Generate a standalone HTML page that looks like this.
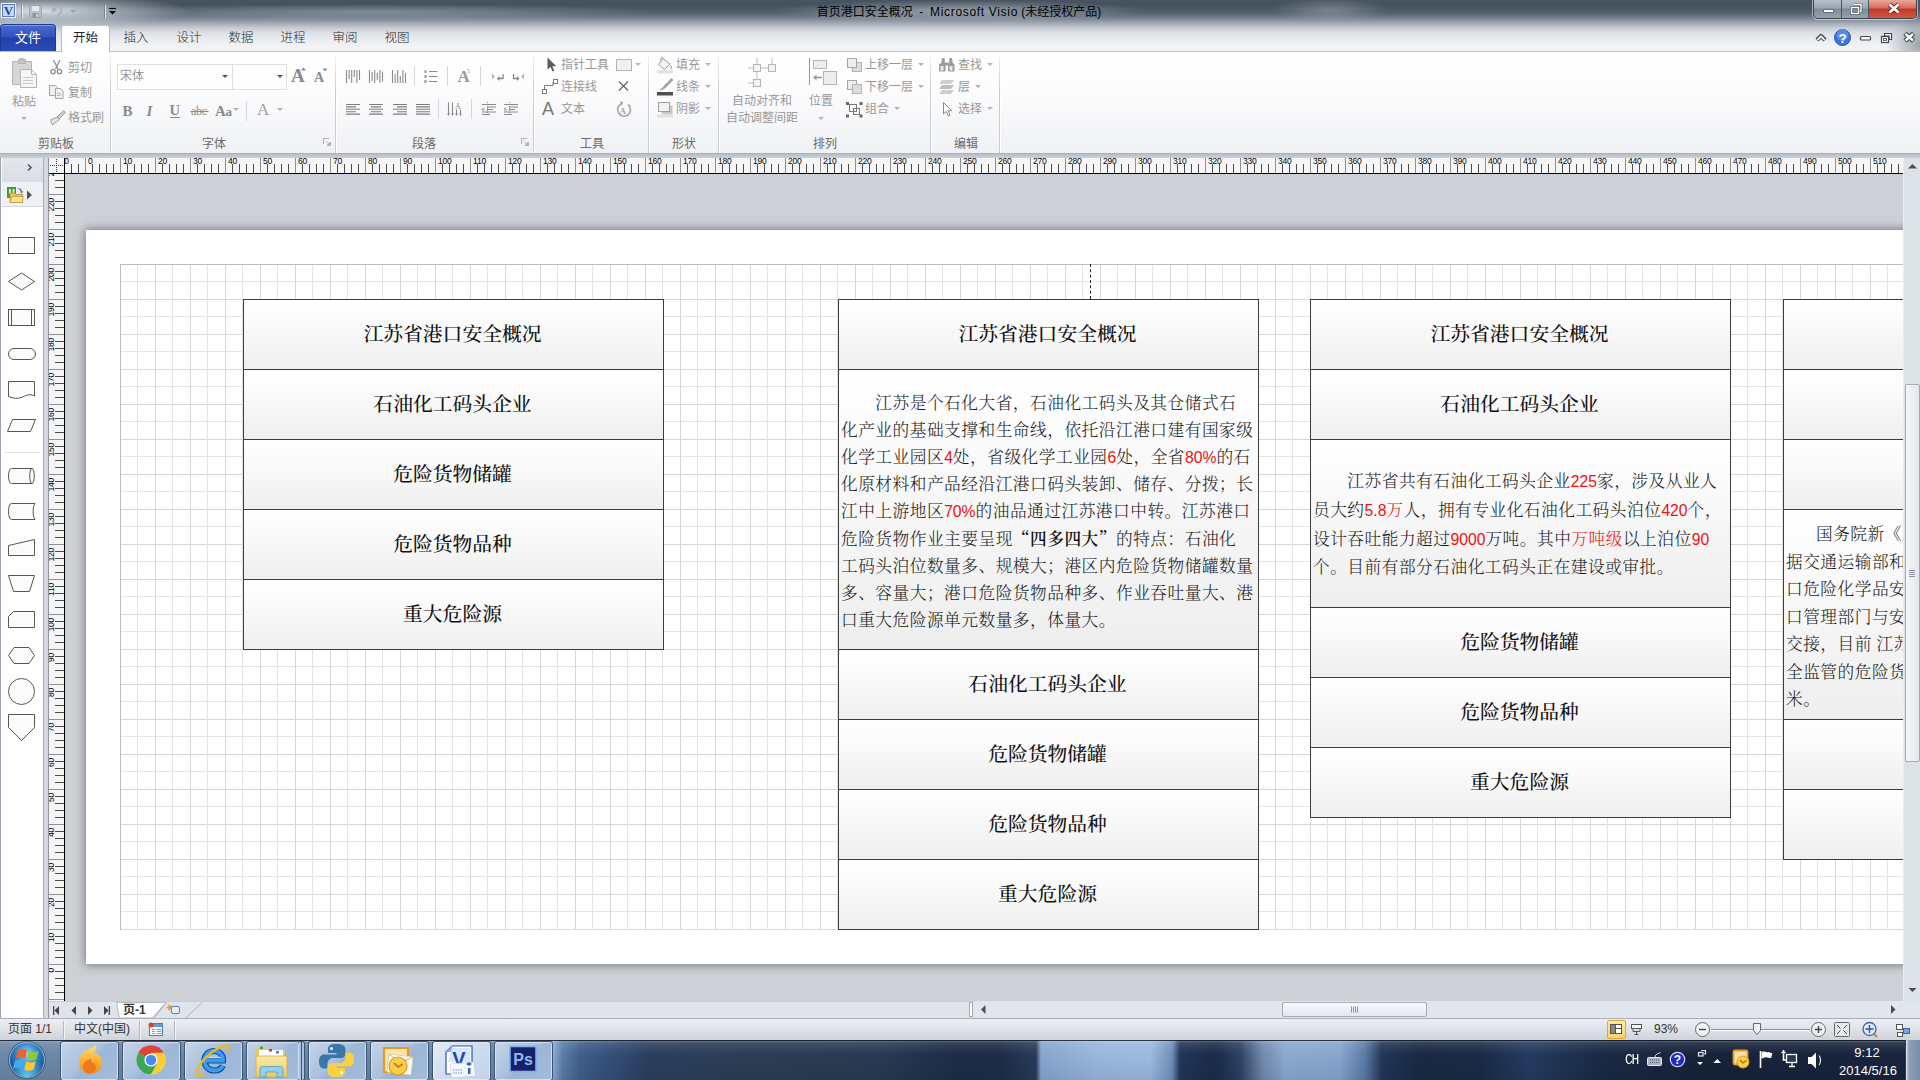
<!DOCTYPE html>
<html lang="zh-CN">
<head>
<meta charset="utf-8">
<title>首页港口安全概况 - Microsoft Visio</title>
<style>
*{box-sizing:border-box;margin:0;padding:0}
html,body{width:1920px;height:1080px;overflow:hidden;background:#dfe3e8}
body{position:relative;font-family:"Liberation Sans","Noto Sans CJK SC",sans-serif;font-size:12px;color:#000}
.abs{position:absolute}
/* ---------- title bar ---------- */
#titlebar{position:absolute;left:0;top:0;width:1920px;height:52px;
 background:
  radial-gradient(ellipse 150px 17px at 40px 11px,rgba(226,232,238,.95),rgba(226,232,238,0) 100%),
  radial-gradient(ellipse 40px 30px at 1925px 45px,rgba(70,82,95,.55),rgba(70,82,95,0) 100%),
  radial-gradient(ellipse 60px 12px at 1330px 10px,rgba(200,208,216,.35),rgba(200,208,216,0) 100%),
  radial-gradient(ellipse 300px 8px at 370px 12px,rgba(165,180,196,.55),rgba(165,180,196,0) 100%),
  radial-gradient(ellipse 190px 11px at 960px 11px,rgba(205,211,219,.6),rgba(205,211,219,0) 100%),
  linear-gradient(to bottom,#48545f 0px,#44515e 5px,#4f5c69 12px,#66727e 16px,#87919c 20px,#a8b0b9 24px,#c6cbd2 28px,#dadee3 32px,#e8eaee 38px,#f0f2f4 46px,#f4f5f7 52px);}
#title{position:absolute;left:759px;top:4px;width:400px;text-align:center;font-size:12px;line-height:17px;color:#000;white-space:nowrap}
/* ---------- canvas ---------- */
#canvas{position:absolute;left:65px;top:174px;width:1838px;height:827px;background:#cdd0d5;overflow:hidden}
#page{position:absolute;left:21px;top:56px;width:1900px;height:734px;background:#fff;box-shadow:0 0 9px 1px rgba(60,66,76,.6)}
#grid{position:absolute;left:34px;top:34px;width:1870px;height:666px;border-left:1px solid #bdbdbd;border-top:1px solid #bdbdbd;
 background-image:
  linear-gradient(to right,#d6d6d6 1px,transparent 1px),
  linear-gradient(to right,#e4e4e4 1px,transparent 1px),
  linear-gradient(to bottom,#d6d6d6 1px,transparent 1px),
  linear-gradient(to bottom,#e4e4e4 1px,transparent 1px);
 background-size:35px 100%,35px 100%,100% 35px,100% 35px;
 background-position:-1px 0,16px 0,0 -1px,0 16px;
 background-repeat:repeat}
.box{position:absolute;border:1px solid #3c3c3c;border-bottom:none;font-family:"Liberation Serif","Noto Serif CJK SC",serif}
.cell{padding-right:2px;border-bottom:1px solid #3c3c3c;background:linear-gradient(to bottom,#ffffff 0%,#fafafa 35%,#efefef 100%);height:70px;text-align:center;font-size:19.8px;font-weight:500;line-height:69px;white-space:nowrap;overflow:hidden;color:#111}
.para{border-bottom:1px solid #3c3c3c;background:linear-gradient(to bottom,#ffffff 0%,#f9f9f9 35%,#eeeeee 100%);font-size:16.7px;font-weight:300;line-height:27px;color:#1a1a1a;white-space:nowrap;overflow:hidden;letter-spacing:.5px}
.para b{font-weight:600;color:#111}
.r{color:#f01010;font-family:"Liberation Sans",sans-serif;font-size:15.7px;letter-spacing:0}
.q{font-family:"Noto Serif CJK SC",serif}
.rc{color:#f01010}
/* ---------- generic ---------- */
.t{position:absolute;white-space:nowrap;line-height:14px;font-size:12px}
.g{color:#8c8c8c}
svg{position:absolute;overflow:visible}
/* ---------- rulers ---------- */
#rgap{position:absolute;left:0;top:153px;width:1920px;height:5px;background:linear-gradient(to bottom,#9fa5af 0,#b9bec6 1px,#cbcfd6 5px)}
#hruler{position:absolute;left:65px;top:158px;width:1838px;height:16px;border-bottom:1px solid #000;overflow:hidden;
 background:
  repeating-linear-gradient(to right,#8f8f8f 0,#8f8f8f 1px,transparent 1px,transparent 35px) 20px 0/100% 100% no-repeat,
  repeating-linear-gradient(to right,#4a4a4a 0,#4a4a4a 1px,transparent 1px,transparent 7px) 6px 6px/100% 100% no-repeat,
  #f5f5f5}
#vruler{position:absolute;left:49px;top:174px;width:16px;height:827px;border-right:1px solid #000;overflow:hidden;
 background:
  repeating-linear-gradient(to bottom,#8f8f8f 0,#8f8f8f 1px,transparent 1px,transparent 35px) 0 20px/100% 100% no-repeat,
  repeating-linear-gradient(to bottom,#4a4a4a 0,#4a4a4a 1px,transparent 1px,transparent 7px) 6px 6px/100% 100% no-repeat,
  #f5f5f5}
#rcorner{position:absolute;left:49px;top:158px;width:16px;height:16px;background:#f5f5f5;border-right:1px solid #000;border-bottom:1px solid #000}
.hl{position:absolute;top:-1px;font-size:8.5px;line-height:9px;color:#000;font-family:"Liberation Sans",sans-serif;letter-spacing:-.2px}
.vl{position:absolute;left:-2px;margin-top:2px;font-size:8.5px;line-height:9px;color:#000;font-family:"Liberation Sans",sans-serif;letter-spacing:-.2px;transform-origin:0 0;transform:rotate(-90deg) translateX(-100%);white-space:nowrap}
#rleft{position:absolute;left:44px;top:158px;width:5px;height:860px;background:linear-gradient(to right,#d6dae0 0,#d6dae0 4px,#8e95a1 4px)}

/* ---------- shapes panel ---------- */
#shapes{position:absolute;left:0;top:158px;width:44px;height:860px;background:#fff;border-left:1px solid #9aa1ad;border-right:1px solid #a9afb9}
#shapes .h1{position:absolute;left:1px;top:0;width:41px;height:24px;background:linear-gradient(#e4e7ec,#d9dde4)}
#shapes .h2{position:absolute;left:1px;top:24px;width:41px;height:25px;background:#eef0f4;border-bottom:1px solid #d3d7de}
#shapes svg{left:-1px;top:0}

/* ---------- tabs / ribbon ---------- */
#filetab{position:absolute;left:0;top:24px;width:56px;height:27px;border-radius:4px 4px 0 0;border:1px solid #1c3a96;border-bottom:none;
 background:linear-gradient(to bottom,#4668cf 0,#3355c0 45%,#2440a8 50%,#2a4bb6 100%);box-shadow:inset 0 1px 0 rgba(255,255,255,.35);color:#fff;text-align:center;font-size:13px;line-height:25px}
#hometab{position:absolute;left:61px;top:25px;width:49px;height:28px;border:1px solid #b9bec7;border-bottom:none;border-radius:3px 3px 0 0;background:#fff;text-align:center;font-size:12.5px;line-height:24px;color:#222;z-index:3}
.tab{position:absolute;top:26px;width:40px;text-align:center;font-size:12.5px;line-height:24px;color:#2a2a2a;font-weight:300}
#ribbon{position:absolute;left:0;top:51px;width:1920px;height:102px;border-top:1px solid #b9bec7;background:linear-gradient(to bottom,#ffffff 0,#fcfcfd 40%,#eff1f4 100%);z-index:2}
.gs{position:absolute;top:3px;width:2px;height:98px;background:linear-gradient(to right,#c9cdd4 0,#c9cdd4 1px,#fff 1px);-webkit-mask-image:linear-gradient(to bottom,rgba(0,0,0,.2) 0,#000 35%);mask-image:linear-gradient(to bottom,rgba(0,0,0,.2) 0,#000 35%)}
.gl{position:absolute;top:84px;margin-top:2px;font-size:12px;line-height:14px;color:#6a6a6a;white-space:nowrap}
.rt{position:absolute;margin-top:1px;font-size:12px;line-height:14px;color:#989898;white-space:nowrap}
.is{position:absolute;width:1px;height:20px;background:#d4d8de}
.dd{position:absolute;width:0;height:0;border-left:3px solid transparent;border-right:3px solid transparent;border-top:3px solid #b4b4b4}
.combo{position:absolute;height:26px;border:1px solid #dde1e7;background:#fdfdfd}

/* ---------- bottom: page tabs, scrollbars, status ---------- */
#vscroll{position:absolute;left:1903px;top:158px;width:17px;height:843px;background:#dde1e8;border-left:1px solid #e9ecf1}
#vthumb{position:absolute;left:1px;top:226px;width:15px;height:378px;border:1px solid #a3abb8;border-radius:2px;background:linear-gradient(to right,#f6f7f9,#e3e6ec)}
#ptabs{position:absolute;left:49px;top:1001px;width:1871px;height:17px;background:#dfe3ea;border-top:1px solid #c8ccd4}
#hscroll{position:absolute;left:975px;top:1001px;width:945px;height:17px;background:#e1e5ec}
#hthumb{position:absolute;left:307px;top:1px;width:145px;height:15px;border:1px solid #a3abb8;border-radius:2px;background:linear-gradient(#f8f9fb,#e4e7ed)}
#status{position:absolute;left:0;top:1018px;width:1920px;height:22px;border-top:1px solid #a7adb8;background:linear-gradient(#eceef2 0,#dfe2e8 50%,#cfd3da 100%)}
.st{position:absolute;top:3px;font-size:12px;line-height:15px;color:#333;white-space:nowrap}
.ss{position:absolute;top:2px;width:2px;height:18px;background:linear-gradient(to right,#b3b8c2 0,#b3b8c2 1px,#f4f5f8 1px)}

/* ---------- taskbar ---------- */
#taskbar{position:absolute;left:0;top:1040px;width:1920px;height:40px;overflow:hidden;
 background:linear-gradient(to right,#6d88a8 0,#6a85a5 552px,#8eabd2 553px,#5d7ea9 562px,#3f5f8c 580px,#34507a 610px,#2b3f5d 650px,#2d3d55 760px,#293a53 880px,#1d2c47 960px,#1e2d48 1000px,#2a3b58 1036px,#86a5cf 1041px,#9ab7de 1100px,#9dbae0 1150px,#6f8fbb 1172px,#22365a 1180px,#1b2b48 1215px,#2c4164 1240px,#6f88ab 1262px,#8ba9d1 1285px,#86a6cf 1340px,#5b7aa6 1365px,#22365a 1382px,#1a2943 1420px,#1b2b46 1480px,#243c60 1530px,#1a2a45 1600px,#17233a 1700px,#18253d 1900px)}
#taskbar:before{content:"";position:absolute;left:0;top:0;width:1920px;height:40px;background:linear-gradient(to bottom,rgba(20,30,45,.85) 0,rgba(20,30,45,.85) 1px,rgba(255,255,255,.28) 1px,rgba(255,255,255,.10) 3px,rgba(255,255,255,0) 14px,rgba(0,0,0,.08) 40px)}
.tbb{position:absolute;top:1px;width:59px;height:40px;border:1px solid #3c5474;border-radius:3px;background:linear-gradient(135deg,rgba(200,216,236,.95) 0,rgba(176,198,226,.92) 45%,rgba(160,186,218,.92) 55%,rgba(170,194,224,.92) 100%);box-shadow:inset 0 0 0 1px rgba(235,242,252,.65)}
.tbb.act{background:linear-gradient(135deg,#e4ecf7 0,#cfdcee 50%,#c2d3ea 100%)}
.tray{position:absolute;color:#fff;white-space:nowrap;font-size:13px;line-height:15px;text-align:center}
</style>
</head>
<body>
<div id="titlebar">
 <div id="title">首页港口安全概况&nbsp; -&nbsp; <span style="letter-spacing:.68px">Microsoft Visio</span> (未经授权产品)</div>
 <svg width="130" height="22" viewBox="0 0 130 22" style="left:0;top:0">
  <rect x="1.500" y="3.500" width="14" height="14" fill="#dfe8f8" stroke="#f4f7fc" stroke-width="1"/>
  <rect x="2.500" y="4.500" width="12" height="12" fill="#c9d8f3" stroke="#3a62c0" stroke-width=".8"/>
  <text x="8.500" y="15" font-family="Liberation Serif,serif" font-weight="700" font-size="13" text-anchor="middle" fill="#1f3fa6">V</text>
  <path d="M21.500 5v13" stroke="#8d96a2" stroke-width="1"/><path d="M22.500 5v13" stroke="#e8ecf0" stroke-width="1"/>
  <g opacity=".9"><rect x="29.500" y="5.500" width="12" height="12" rx="1" fill="#b9bec6" stroke="#9aa0a9"/><rect x="32" y="6" width="7" height="5" fill="#e9ebee"/><rect x="32.500" y="13" width="6" height="4.500" fill="#878d96"/><rect x="36" y="13.800" width="1.700" height="3" fill="#dcdfe3"/></g>
  <path d="M54.500 9.500c2-3.500 7.500-2.500 6.500 2-.500 2-2 3.500-3.500 4.500" fill="none" stroke="#aeb5be" stroke-width="2.200"/><path d="M51.500 6l.500 6.500 5.500-2z" fill="#aeb5be"/>
  <path d="M70 10h6l-3 3z" fill="#9aa1ab"/>
  <path d="M104.500 5v13" stroke="#79828e" stroke-width="1"/><path d="M105.500 5v13" stroke="#dfe3e8" stroke-width="1"/>
  <path d="M109 8.500h7" stroke="#000" stroke-width="1.200"/><path d="M109 11h7l-3.500 3.500z" fill="#000"/>
 </svg>
 <!-- window buttons -->
 <div style="position:absolute;left:1813px;top:0;width:104px;height:19px;border:1px solid #39434f;border-top:none;border-radius:0 0 5px 5px;box-shadow:0 0 0 1px rgba(255,255,255,.55);overflow:hidden">
  <div style="position:absolute;left:0;top:0;width:28px;height:18px;background:linear-gradient(#b9c1cb 0,#9aa5b1 45%,#7d8997 50%,#98a4b0 100%);border-right:1px solid #4a5562"></div>
  <div style="position:absolute;left:28px;top:0;width:27px;height:18px;background:linear-gradient(#b9c1cb 0,#9aa5b1 45%,#7d8997 50%,#98a4b0 100%);border-right:1px solid #4a5562"></div>
  <div style="position:absolute;left:55px;top:0;width:48px;height:18px;background:linear-gradient(#e8a89c 0,#d8685a 45%,#c03828 50%,#d05a40 100%)"></div>
  <svg width="104" height="19" viewBox="0 0 104 19" style="left:0;top:0">
   <rect x="9.500" y="9.500" width="10" height="3" rx=".500" fill="#fff" stroke="#4a5562" stroke-width=".8"/>
   <path d="M40 4.500h7v7h-2" fill="none" stroke="#4a5562" stroke-width="2.600"/><path d="M40 4.500h7v7h-2" fill="none" stroke="#fff" stroke-width="1.300"/>
   <rect x="37.500" y="7.500" width="7" height="6" fill="none" stroke="#4a5562" stroke-width="2.800"/><rect x="37.500" y="7.500" width="7" height="6" fill="none" stroke="#fff" stroke-width="1.400"/>
   <path d="M75.500 4.500l9 8M84.500 4.500l-9 8" stroke="#5a2018" stroke-width="4.400"/><path d="M75.500 4.500l9 8M84.500 4.500l-9 8" stroke="#fff" stroke-width="2.800"/>
  </svg>
 </div>
 <!-- ribbon right controls -->
 <svg width="110" height="24" viewBox="1810 26 110 24" style="left:1810px;top:26px">
  <path d="M1817 40l4-4 4 4" fill="none" stroke="#3e4650" stroke-width="4.200" stroke-linejoin="round"/><path d="M1817.500 39.800l3.500-3.500 3.500 3.500" fill="none" stroke="#fff" stroke-width="1.800"/>
  <circle cx="1842.500" cy="37.500" r="8" fill="#3a72d8" stroke="#2a56b0" stroke-width="1"/><circle cx="1842.500" cy="35" r="6" fill="#6a9cf0" opacity=".6"/>
  <text x="1842.500" y="42.500" font-family="Liberation Sans,sans-serif" font-weight="700" font-size="13.500" text-anchor="middle" fill="#fff">?</text>
  <rect x="1860.500" y="36.500" width="10" height="3.500" rx="1" fill="#fff" stroke="#3e4650" stroke-width="1.200"/>
  <g fill="#fff" stroke="#3e4650" stroke-width="1.200"><path d="M1884.500 33.500h7v6h-2.500v-3.500h-4.500z"/><rect x="1881.500" y="36.500" width="7" height="6"/><rect x="1883.500" y="38.500" width="3" height="2" stroke-width=".8"/></g>
  <path d="M1905 33.500l8.500 7.500M1913.500 33.500l-8.500 7.500" stroke="#3e4650" stroke-width="4.800"/><path d="M1905.500 34l7.500 6.500M1913 34l-7.500 6.500" stroke="#fff" stroke-width="2.400"/>
 </svg>
</div>
<div id="filetab">文件</div>
<div id="hometab">开始</div>
<div class="tab" style="left:116px">插入</div><div class="tab" style="left:169px">设计</div><div class="tab" style="left:221px">数据</div><div class="tab" style="left:273px">进程</div><div class="tab" style="left:325px">审阅</div><div class="tab" style="left:377px">视图</div>

<div id="ribbon">
<div class="gs" style="left:110px"></div><div class="gs" style="left:335px"></div><div class="gs" style="left:533px"></div><div class="gs" style="left:648px"></div><div class="gs" style="left:718px"></div><div class="gs" style="left:930px"></div><div class="gs" style="left:999px"></div><div class="gl" style="left:38px;top:83px">剪贴板</div><div class="gl" style="left:202px;top:83px">字体</div><div class="gl" style="left:412px;top:83px">段落</div><div class="gl" style="left:580px;top:83px">工具</div><div class="gl" style="left:672px;top:83px">形状</div><div class="gl" style="left:813px;top:83px">排列</div><div class="gl" style="left:954px;top:83px">编辑</div><svg width="9" height="9" viewBox="0 0 9 9" style="left:323px;top:86px"><path d="M.5 6V.5H6" fill="none" stroke="#b0b0b0"/><path d="M3.500 3.500l3 3M7.500 4v3.500H4z" stroke="#b0b0b0" fill="#b0b0b0" stroke-width="1"/></svg><svg width="9" height="9" viewBox="0 0 9 9" style="left:521px;top:86px"><path d="M.5 6V.5H6" fill="none" stroke="#b0b0b0"/><path d="M3.500 3.500l3 3M7.500 4v3.500H4z" stroke="#b0b0b0" fill="#b0b0b0" stroke-width="1"/></svg><div class="rt" style="left:12px;top:42px">粘贴</div><div class="dd" style="left:21px;top:65px"></div><div class="rt" style="left:68px;top:8px">剪切</div><div class="rt" style="left:68px;top:33px">复制</div><div class="rt" style="left:68px;top:58px">格式刷</div><svg width="110" height="100" viewBox="0 52 110 100" style="left:0;top:0">
 <g stroke="#b5b5b5" stroke-width="1" fill="#e4e4e4">
  <path d="M12.500 61.500h6c0-4 7-4 7 0h6v23h-19z" fill="#d6d6d6"/>
  <rect x="18.500" y="59.500" width="7" height="4" fill="#c4c4c4"/>
  <path d="M20.500 69.500h11l5 5v13h-16z" fill="#f6f6f6"/><path d="M31.500 69.500v5h5" fill="none"/>
  <path d="M23 77.500h10M23 80.500h10M23 83.500h10" stroke="#c9c9c9" fill="none"/>
 </g>
 <g stroke="#8f8f8f" fill="none" stroke-width="1.300">
  <path d="M53.500 60l4.500 9M60 60l-4.500 9"/><circle cx="53" cy="71.500" r="2.200"/><circle cx="59.500" cy="71.500" r="2.200"/>
 </g>
 <g stroke="#a5a5a5" fill="#f1f1f1" stroke-width="1">
  <path d="M49.500 85.500h6l2 2v8h-8z"/><path d="M55.500 88.500h5l2.500 2.500v7.500h-7.500z"/><path d="M57 93.500h4M57 95.500h4" stroke="#bcbcbc"/>
 </g>
 <g stroke="#a0a0a0" stroke-width="1">
  <path d="M63.500 110.500l2 2-7 7-2-2z" fill="#cfcfcf"/><path d="M57 117l-6.500 3 2 5 7-5.500z" fill="#e2e2e2"/>
 </g>
</svg>
<div class="combo" style="left:117px;top:12px;width:116px"></div><div class="combo" style="left:232px;top:12px;width:55px"></div><div class="rt" style="left:120px;top:16px">宋体</div><div class="dd" style="left:222px;top:23px;border-top-color:#555"></div><div class="dd" style="left:277px;top:23px;border-top-color:#555"></div><svg width="230" height="100" viewBox="110 52 230 100" style="left:110px;top:0" font-family="Liberation Serif,serif" fill="#8a8a8a">
 <text x="291" y="82" font-size="19" font-weight="700">A</text><path d="M301 70.500l2.500-3 2.500 3z"/>
 <text x="314" y="82" font-size="14" font-weight="700">A</text><path d="M322.500 68.500h5l-2.500 3z"/>
 <text x="122.500" y="116" font-size="15" font-weight="700">B</text>
 <text x="146.500" y="116" font-size="15" font-style="italic" font-weight="700">I</text>
 <text x="169.500" y="115" font-size="14.500" font-weight="700">U</text><path d="M170 117.500h10" stroke="#8a8a8a"/>
 <text x="191" y="115" font-size="12" letter-spacing="-.3">abc</text><path d="M190.500 111.500h18" stroke="#8a8a8a" stroke-width="1"/>
 <text x="215" y="116" font-size="15" font-weight="700">A</text><text x="225.500" y="116" font-size="13" font-weight="700">a</text>
 <text x="257" y="115" font-size="17" fill="#a0a0a0">A</text>
</svg>
<div class="dd" style="left:233px;top:56px"></div><div class="dd" style="left:277px;top:56px"></div><div class="is" style="left:246px;top:49px"></div><svg width="200" height="100" viewBox="336 52 200 100" style="left:336px;top:0" fill="none" stroke="#8a8a8a"><path d="M346.5 70.0V83.0M349.1 70.0V79.0M351.7 70.0V83.0M354.3 70.0V77.0M356.9 70.0V83.0M359.5 70.0V80.0" stroke="#8a8a8a" stroke-width="1.100" fill="none"/><path d="M369.5 70.0V83.0M372.1 72.0V81.0M374.7 70.0V83.0M377.3 73.0V80.0M379.9 70.0V83.0M382.5 71.5V81.5" stroke="#8a8a8a" stroke-width="1.100" fill="none"/><path d="M392.5 70.0V83.0M395.1 74.0V83.0M397.7 70.0V83.0M400.3 76.0V83.0M402.9 70.0V83.0M405.5 73.0V83.0" stroke="#8a8a8a" stroke-width="1.100" fill="none"/><g fill="#a0a0a0" stroke="none"><circle cx="425.500" cy="71.700" r="1.400"/><circle cx="425.500" cy="76.500" r="1.400"/><circle cx="425.500" cy="81.500" r="1.400"/></g><path d="M429 71.500h8.500M429 76.500h8.500M429 81.500h8.500" stroke-width="1.100"/><text x="457.500" y="82" font-family="Liberation Serif,serif" font-weight="700" font-size="17" fill="#9a9a9a" stroke="none">A</text><text x="466.500" y="73" font-family="Liberation Serif,serif" font-size="7" fill="#9a9a9a" stroke="none">5</text><path d="M492 73.500l3 3-3 3z" fill="#b5b5b5" stroke="none"/><path d="M503 74v4.500h-5.500" stroke-width="1.300"/><path d="M499.500 76l-2.500 2.500 2.500 2.500z" fill="#8a8a8a" stroke="none"/><path d="M524 73.500l-3 3 3 3z" fill="#b5b5b5" stroke="none"/><path d="M513.500 74v4.500h5" stroke-width="1.300"/><path d="M517 76l2.500 2.500-2.500 2.500z" fill="#8a8a8a" stroke="none"/><path d="M346.0 104.5H360.0M346.0 106.9H356.0M346.0 109.3H360.0M346.0 111.7H356.0M346.0 114.1H360.0" stroke="#7d7d7d" stroke-width="1.100" fill="none"/><path d="M369.0 104.5H383.0M371.0 106.9H381.0M369.0 109.3H383.0M371.0 111.7H381.0M369.0 114.1H383.0" stroke="#7d7d7d" stroke-width="1.100" fill="none"/><path d="M393.0 104.5H407.0M397.0 106.9H407.0M393.0 109.3H407.0M397.0 111.7H407.0M393.0 114.1H407.0" stroke="#7d7d7d" stroke-width="1.100" fill="none"/><path d="M416.0 104.5H430.0M416.0 106.9H430.0M416.0 109.3H430.0M416.0 111.7H430.0M416.0 114.1H430.0" stroke="#7d7d7d" stroke-width="1.100" fill="none"/><path d="M448.500 102.500v13M452.500 102.500v13M456.500 109.500v6M460.500 109.500v6" stroke-width="1.100"/><path d="M447 113.500l1.500 2 1.500-2zM451 113.500l1.500 2 1.500-2zM455 113.500l1.500 2 1.500-2zM459 113.500l1.500 2 1.500-2z" fill="#8a8a8a" stroke="none"/><text x="455" y="108.500" font-family="Liberation Serif,serif" font-size="8" fill="#8a8a8a" stroke="none">A</text><path d="M482 104.500h14M487 107h9M487 109.500h6M482 112h14M482 114.500h8" stroke-width="1.200"/><path d="M484.500 107l-4 2.500 4 2.500z" fill="#bdbdbd" stroke="none"/><path d="M487.500 102v14" stroke-dasharray="1 1" stroke-width="1"/><path d="M504 104.500h14M509 107h9M509 109.500h6M504 112h14M504 114.500h8" stroke-width="1.200"/><path d="M504 107l4 2.500-4 2.500z" fill="#bdbdbd" stroke="none"/><path d="M509.500 102v14" stroke-dasharray="1 1" stroke-width="1"/></svg>
<div class="is" style="left:414px;top:14px"></div><div class="is" style="left:447px;top:14px"></div><div class="is" style="left:480px;top:14px"></div><div class="is" style="left:438px;top:47px"></div><div class="is" style="left:471px;top:47px"></div><div class="rt" style="left:561px;top:5px">指针工具</div><div class="rt" style="left:561px;top:27px">连接线</div><div class="rt" style="left:561px;top:49px">文本</div><div class="dd" style="left:635px;top:11px"></div><svg width="120" height="100" viewBox="536 52 120 100" style="left:536px;top:0" fill="none" stroke="#8a8a8a">
 <path d="M547.500 57.500v12l3-2.500 2 4.500 1.800-.8-2-4.500h4z" fill="#5a5a5a" stroke="none"/>
 <rect x="616.500" y="59.500" width="15" height="11" fill="#f1f1f1" stroke="#b5b5b5"/>
 <rect x="542.500" y="89.500" width="4" height="4" stroke="#7a7a7a"/><rect x="553.500" y="79.500" width="4" height="4" stroke="#7a7a7a"/><path d="M544.500 89v-3.500h8.500v-3.500" stroke="#7a7a7a"/>
 <path d="M619 81.500l9 9M628 81.500l-9 9" stroke="#6a6a6a" stroke-width="1.300"/>
 <text x="542" y="115" font-family="Liberation Sans,sans-serif" font-size="18" fill="#777" stroke="none">A</text>
 <path d="M628 104.500a6.500 6.500 0 1 1-6-1" stroke="#a5a5a5" stroke-width="1.600"/><path d="M620 101l3.500 1.500-2.500 3z" fill="#a5a5a5" stroke="none"/>
 <text x="619.500" y="114" font-family="Liberation Serif,serif" font-size="9" font-weight="700" fill="#a5a5a5" stroke="none">A</text>
</svg>
<div class="rt" style="left:676px;top:5px">填充</div><div class="rt" style="left:676px;top:27px">线条</div><div class="rt" style="left:676px;top:49px">阴影</div><div class="dd" style="left:705px;top:11px"></div><div class="dd" style="left:705px;top:33px"></div><div class="dd" style="left:705px;top:55px"></div><svg width="70" height="100" viewBox="650 52 70 100" style="left:650px;top:0" fill="none" stroke="#9a9a9a">
 <path d="M663 58.500l7 5.500-5.500 5.500-6-5z" fill="#f3f3f3"/><path d="M661 61c-1-3 1-4.500 2.500-3" /><path d="M671 64.500c1.500 2 1.500 3.500.5 4.500s-2-.5-.5-4.500z" fill="#b5b5b5" stroke="none"/>
 <rect x="657" y="70" width="16" height="3.500" fill="#e2e2e2" stroke="none"/>
 <path d="M660 90c2-1 3.500-3 5-5l6.500-6.500 1.500 1.500-7 7c-1.500 1.500-3.500 2.500-6 3z" fill="#a8a8a8" stroke="#9a9a9a" stroke-width=".8"/>
 <rect x="657" y="92" width="16" height="3.500" fill="#4f4f4f" stroke="none"/>
 <rect x="661.500" y="105.500" width="11" height="9" fill="#c9c9c9" stroke="none"/><rect x="658.500" y="102.500" width="11" height="9" fill="#f1f1f1" stroke="#a0a0a0"/>
 <rect x="657" y="114.500" width="16" height="3" fill="#e2e2e2" stroke="none"/>
</svg>
<div class="rt" style="left:732px;top:41px">自动对齐和</div><div class="rt" style="left:726px;top:58px">自动调整间距</div><div class="rt" style="left:809px;top:41px">位置</div><div class="dd" style="left:818px;top:65px"></div><div class="rt" style="left:865px;top:5px">上移一层</div><div class="rt" style="left:865px;top:27px">下移一层</div><div class="rt" style="left:865px;top:49px">组合</div><div class="dd" style="left:918px;top:11px"></div><div class="dd" style="left:918px;top:33px"></div><div class="dd" style="left:894px;top:55px"></div><svg width="215" height="100" viewBox="720 52 215 100" style="left:720px;top:0" fill="none" stroke="#b5b5b5">
 <rect x="753.500" y="64.500" width="7" height="7" fill="#f3f3f3"/><rect x="768.500" y="64.500" width="7" height="7" fill="#f3f3f3"/><rect x="753.500" y="79.500" width="7" height="7" fill="#f3f3f3"/>
 <path d="M757 58v6M757 72v7M761 68h7M748 68h5M748 83h5M772 58v6" stroke="#bdbdbd"/>
 <path d="M809.500 58v27" stroke="#9a9a9a"/><rect x="813.500" y="60.500" width="13" height="8" fill="#ededed"/><rect x="823.500" y="71.500" width="13" height="13" fill="#ededed"/>
 <path d="M822 77.500h-6" stroke="#9a9a9a" stroke-width="1.600"/><path d="M816.500 74.500l-3.500 3 3.500 3z" fill="#9a9a9a" stroke="none"/>
 <rect x="852.500" y="62.500" width="9" height="9" fill="#dcdcdc"/><rect x="847.500" y="58.500" width="9" height="9" fill="#ededed" stroke="#a5a5a5"/>
 <rect x="847.500" y="80.500" width="9" height="9" fill="#ededed" stroke="#a5a5a5"/><rect x="852.500" y="84.500" width="9" height="9" fill="#dcdcdc"/>
 <g stroke="#7a7a7a"><rect x="849.500" y="104.500" width="7" height="7" fill="none"/><rect x="853.500" y="108.500" width="6" height="6" fill="none"/><g fill="#666" stroke="none"><rect x="846" y="102" width="3" height="3"/><rect x="859.500" y="102" width="3" height="3"/><rect x="846" y="114.500" width="3" height="3"/><rect x="859.500" y="114.500" width="3" height="3"/></g></g>
</svg>
<div class="rt" style="left:958px;top:5px">查找</div><div class="rt" style="left:958px;top:27px">层</div><div class="rt" style="left:958px;top:49px">选择</div><div class="dd" style="left:987px;top:11px"></div><div class="dd" style="left:975px;top:33px"></div><div class="dd" style="left:987px;top:55px"></div><svg width="70" height="100" viewBox="932 52 70 100" style="left:932px;top:0" fill="none" stroke="#8a8a8a">
 <g fill="#9c9c9c" stroke="none"><rect x="939" y="63.500" width="6.500" height="8" rx="1.200"/><rect x="948" y="63.500" width="6.500" height="8" rx="1.200"/><path d="M941 64l1-6h2.500l.5 6zM949 64l.5-6h2.500l1 6z"/><rect x="945" y="62.500" width="3.500" height="3"/><rect x="940.500" y="66" width="3" height="4.500" fill="#e9e9e9"/><rect x="949.500" y="66" width="3" height="4.500" fill="#e9e9e9"/></g>
 <g fill="#cfcfcf" stroke="none"><path d="M942 80h12l-3 4h-12z"/><path d="M942 85h12l-3 4h-12z" fill="#bdbdbd"/><path d="M942 90h12l-3 4h-12z" fill="#cfcfcf"/></g>
 <path d="M943.500 102.500v11.500l2.800-2.500 2 4.500 1.700-.8-2-4.500h3.800z" fill="#fff" stroke="#8a8a8a" stroke-width="1"/>
</svg>
</div>

<div id="shapes"><div class="h1"></div><div class="h2"></div>
<svg width="44" height="860" viewBox="0 158 44 860" fill="#fbfbfb" stroke="#555" stroke-width="1">
<path d="M28 164.5l3 3-3 3" fill="none" stroke="#555" stroke-width="1.6"/>
<g stroke="none"><rect x="7" y="187" width="9" height="11" fill="#3f9a3c"/><rect x="9" y="189" width="2" height="5" fill="#d8f0d0"/><rect x="12.5" y="189" width="2" height="5" fill="#d8f0d0"/><path d="M10 193h5l1 1.5h6.5v8H10z" fill="#f2c45a" stroke="#b98a24" stroke-width=".8"/><path d="M10 202.5l2-6h11.500l-1.500 6z" fill="#fbe29a" stroke="#b98a24" stroke-width=".6"/><path d="M17 188.500c3-1 5 .5 5 3l1.200-.5-1.800 2.500-1.800-2 1.200.2c0-1.500-1.300-2.700-3.800-3.200z" fill="#3e6fc4"/><path d="M27 190.500l5 4.500-5 4.500z" fill="#555"/></g>
<g><rect x="8.5" y="237.500" width="26" height="16"/><path d="M8.500 281.500l13-8.500 13 8.500-13 8.500z"/><rect x="8.500" y="309.500" width="26" height="16"/><path d="M11.500 309.500v16M31.500 309.500v16" fill="none"/><rect x="8.500" y="348.500" width="27" height="11" rx="5.500"/><path d="M8.500 381.500h26v14.500c-6-3-9 0-13 1.500s-8 1-13-1z"/><path d="M12.500 419.500h23l-5 12h-23z"/></g><path d="M5 452.500h35" stroke="#e1e4e9" fill="none"/><g><path d="M11.500 468.500h20.500c3 0 3 15 0 15h-20.500c-4 0-4-15 0-15z"/><path d="M32 468.500c-3 0-3 15 0 15" fill="none"/><path d="M11.500 503.500h23.500c-2.500 3-2.500 13 0 16h-23.500c-4 0-4-16 0-16z"/><path d="M8.500 545.500l26-6v16h-26z"/><path d="M8.500 575.500h26l-5 16h-16z"/><path d="M13.500 611.500h21v16h-26v-11z"/><path d="M8.500 655.500l5.500-8h15l5.500 8-5.500 8h-15z"/><circle cx="21.500" cy="691.500" r="13"/><path d="M8.500 714.500h26v13l-13 13-13-13z"/></g>
</svg></div>

<div id="rgap"></div>
<div id="rleft"></div>
<div id="hruler"><span class="hl" style="left:-8px">-10</span><span class="hl" style="left:23px">0</span><span class="hl" style="left:58px">10</span><span class="hl" style="left:93px">20</span><span class="hl" style="left:128px">30</span><span class="hl" style="left:163px">40</span><span class="hl" style="left:198px">50</span><span class="hl" style="left:233px">60</span><span class="hl" style="left:268px">70</span><span class="hl" style="left:303px">80</span><span class="hl" style="left:338px">90</span><span class="hl" style="left:373px">100</span><span class="hl" style="left:408px">110</span><span class="hl" style="left:443px">120</span><span class="hl" style="left:478px">130</span><span class="hl" style="left:513px">140</span><span class="hl" style="left:548px">150</span><span class="hl" style="left:583px">160</span><span class="hl" style="left:618px">170</span><span class="hl" style="left:653px">180</span><span class="hl" style="left:688px">190</span><span class="hl" style="left:723px">200</span><span class="hl" style="left:758px">210</span><span class="hl" style="left:793px">220</span><span class="hl" style="left:828px">230</span><span class="hl" style="left:863px">240</span><span class="hl" style="left:898px">250</span><span class="hl" style="left:933px">260</span><span class="hl" style="left:968px">270</span><span class="hl" style="left:1003px">280</span><span class="hl" style="left:1038px">290</span><span class="hl" style="left:1073px">300</span><span class="hl" style="left:1108px">310</span><span class="hl" style="left:1143px">320</span><span class="hl" style="left:1178px">330</span><span class="hl" style="left:1213px">340</span><span class="hl" style="left:1248px">350</span><span class="hl" style="left:1283px">360</span><span class="hl" style="left:1318px">370</span><span class="hl" style="left:1353px">380</span><span class="hl" style="left:1388px">390</span><span class="hl" style="left:1423px">400</span><span class="hl" style="left:1458px">410</span><span class="hl" style="left:1493px">420</span><span class="hl" style="left:1528px">430</span><span class="hl" style="left:1563px">440</span><span class="hl" style="left:1598px">450</span><span class="hl" style="left:1633px">460</span><span class="hl" style="left:1668px">470</span><span class="hl" style="left:1703px">480</span><span class="hl" style="left:1738px">490</span><span class="hl" style="left:1773px">500</span><span class="hl" style="left:1808px">510</span><span class="hl" style="left:1843px">520</span></div>
<div id="vruler"><span class="vl" style="top:-13px">230</span><span class="vl" style="top:22px">220</span><span class="vl" style="top:57px">210</span><span class="vl" style="top:92px">200</span><span class="vl" style="top:127px">190</span><span class="vl" style="top:162px">180</span><span class="vl" style="top:197px">170</span><span class="vl" style="top:232px">160</span><span class="vl" style="top:267px">150</span><span class="vl" style="top:302px">140</span><span class="vl" style="top:337px">130</span><span class="vl" style="top:372px">120</span><span class="vl" style="top:407px">110</span><span class="vl" style="top:442px">100</span><span class="vl" style="top:477px">90</span><span class="vl" style="top:512px">80</span><span class="vl" style="top:547px">70</span><span class="vl" style="top:582px">60</span><span class="vl" style="top:617px">50</span><span class="vl" style="top:652px">40</span><span class="vl" style="top:687px">30</span><span class="vl" style="top:722px">20</span><span class="vl" style="top:757px">10</span><span class="vl" style="top:792px">0</span><span class="vl" style="top:827px">-10</span></div>
<div id="rcorner"><svg width="15" height="15" viewBox="0 0 15 15" style="left:0;top:0"><path d="M1 7.5H14M7.5 1V14" stroke="#1a1aff" stroke-width="1" stroke-dasharray="1 1" fill="none"/></svg></div>

<div id="canvas">
 <div id="page">
  <div id="grid"></div>
  <div id="guide" style="position:absolute;left:1004px;top:34px;width:0;height:35px;border-left:1px dashed #222"></div>
  <!-- box 1 -->
  <div class="box" style="left:157px;top:69px;width:421px">
   <div class="cell">江苏省港口安全概况</div>
   <div class="cell">石油化工码头企业</div>
   <div class="cell">危险货物储罐</div>
   <div class="cell">危险货物品种</div>
   <div class="cell">重大危险源</div>
  </div>
  <!-- box 2 -->
  <div class="box" style="left:752px;top:69px;width:421px">
   <div class="cell">江苏省港口安全概况</div>
   <div class="para" style="height:280px;padding:20px 0 0 2px">　　江苏是个石化大省，石油化工码头及其仓储式石<br>化产业的基础支撑和生命线，依托沿江港口建有国家级<br>化学工业园区<span class="r">4</span>处，省级化学工业园<span class="r">6</span>处，全省<span class="r">80%</span>的石<br>化原材料和产品经沿江港口码头装卸、储存、分拨；长<br>江中上游地区<span class="r">70%</span>的油品通过江苏港口中转。江苏港口<br>危险货物作业主要呈现<b class="q">“四多四大”</b>的特点：石油化<br>工码头泊位数量多、规模大；港区内危险货物储罐数量<br>多、容量大；港口危险货物品种多、作业吞吐量大、港<br>口重大危险源单元数量多，体量大。</div>
   <div class="cell">石油化工码头企业</div>
   <div class="cell">危险货物储罐</div>
   <div class="cell">危险货物品种</div>
   <div class="cell">重大危险源</div>
  </div>
  <!-- box 3 -->
  <div class="box" style="left:1224px;top:69px;width:421px">
   <div class="cell">江苏省港口安全概况</div>
   <div class="cell">石油化工码头企业</div>
   <div class="para" style="height:168px;padding:28px 0 0 2px;line-height:28.8px">　　江苏省共有石油化工码头企业<span class="r">225</span>家，涉及从业人<br>员大约<span class="r">5.8</span><span class="rc">万</span>人，拥有专业化石油化工码头泊位<span class="r">420</span>个，<br>设计吞吐能力超过<span class="r">9000</span>万吨。其中<span class="rc">万吨级</span>以上泊位<span class="r">90</span><br>个。目前有部分石油化工码头正在建设或审批。</div>
   <div class="cell">危险货物储罐</div>
   <div class="cell">危险货物品种</div>
   <div class="cell">重大危险源</div>
  </div>
  <!-- box 4 -->
  <div class="box" style="left:1697px;top:69px;width:421px">
   <div class="cell"></div>
   <div class="cell"></div>
   <div class="cell"></div>
   <div class="para" style="height:210px;padding:11px 0 0 2px;line-height:27.5px"><span style="display:inline-block;width:30px"></span>国务院新《危险化学品安全管理条例》实施后，根<br>据交通运输部和省政府的要求，各地港口管理部门对港<br>口危险化学品安全监管职责进行了调整，目前各地港<br>口管理部门与安监部门已基本完成储罐安全监管职责<br>交接，目前 江苏省港口管理部门负责实施储存环节安<br>全监管的危险货物储罐共有约4200个，总罐容约2000万立方<br>米。</div>
   <div class="cell"></div>
   <div class="cell"></div>
  </div>
 </div>
</div>

<div id="vscroll"><div id="vthumb"></div>
 <svg width="17" height="843" viewBox="0 0 17 843" style="left:0;top:0"><path d="M4 10.500l4.500-4.500 4.500 4.500z" fill="#4d4d4d"/><path d="M4.500 830l4 4 4-4z" fill="#4d4d4d"/><path d="M5 412.500h6M5 414.500h6M5 416.500h6M5 418.500h6" stroke="#8a93a3" stroke-width="1"/></svg>
</div>
<div id="ptabs">
 <svg width="300" height="17" viewBox="49 1001 300 17" style="left:0;top:0">
  <g fill="#444"><path d="M53 1005v9h1.300v-9zM59 1005v9l-4.500-4.500z"/><path d="M76 1005v9l-4.500-4.500z"/><path d="M88 1005v9l4.500-4.500z"/><path d="M104 1005v9l4.500-4.500zM108.700 1005v9h1.300v-9z"/></g>
  <path d="M116.500 1001.500c1 0 1.500 15.500 4 15.500h31.500l14-15.500z" fill="#fff" stroke="#b4b9c2" stroke-width="1"/>
  <path d="M154 1017l12.500-15.500M186 1017l16-15.500" stroke="#a9afb9" stroke-width="1" fill="none"/>
  <rect x="171.500" y="1005.500" width="8" height="7" rx="1.500" fill="#e4ecf8" stroke="#5f7fb4" stroke-width="1"/><path d="M169 1003.500l1.200 1.800 2-.5-1.200 1.700 1.200 1.700-2-.5-1.200 1.800-.3-2.200-2-.7 2-.8z" fill="#f0a020" stroke="#c87a10" stroke-width=".4"/>
 </svg>
 <div style="position:absolute;left:74px;top:0;width:30px;font-size:12px;line-height:16px;font-weight:700;color:#333;white-space:nowrap">页-1</div>
</div>
<div id="hscroll">
 <div style="position:absolute;left:-6px;top:1px;width:4px;height:15px;border:1px solid #a3abb8;background:#fafbfc"></div>
 <div id="hthumb"></div>
 <svg width="945" height="17" viewBox="0 0 945 17" style="left:0;top:0"><path d="M10.500 4v9l-4.500-4.500z" fill="#4d4d4d"/><path d="M916 4v9l4.500-4.500z" fill="#4d4d4d"/><path d="M376.500 5.500v6M378.500 5.500v6M380.500 5.500v6M382.500 5.500v6" stroke="#8a93a3"/></svg>
</div>
<div id="status">
 <div class="st" style="left:8px">页面 1/1</div><div class="ss" style="left:63px"></div>
 <div class="st" style="left:74px">中文(中国)</div><div class="ss" style="left:139px"></div><div class="ss" style="left:174px"></div>
 <svg width="16" height="16" viewBox="0 0 16 16" style="left:148px;top:3px"><rect x="1.500" y="1.500" width="13" height="12" fill="#fff" stroke="#4f78c0"/><rect x="2" y="2" width="12" height="3" fill="#6f96d8"/><path d="M4 7.500h3M8.500 7.500h5M4 9.500h3M8.500 9.500h5M4 11.500h3M8.500 11.500h5" stroke="#7a9ad0"/><circle cx="3" cy="3" r="2.500" fill="#e04020"/></svg>
 <div class="ss" style="left:1608px"></div>
 <div style="position:absolute;left:1607px;top:1px;width:19px;height:19px;border:1px solid #d8a83c;border-radius:2px;background:linear-gradient(#fde9a8,#fbd362)"></div>
 <svg width="320" height="22" viewBox="1600 1019 320 22" style="left:1600px;top:0">
  <rect x="1610.500" y="1024.500" width="11" height="9" fill="#fff" stroke="#555"/><path d="M1615.500 1024.500v9M1615.500 1028.500h6" stroke="#555"/><rect x="1611" y="1025" width="4" height="8" fill="#888"/>
  <g stroke="#555" fill="none"><rect x="1631.500" y="1024.500" width="10" height="4" fill="#f4f4f4"/><path d="M1633 1029v2.500h7v-2.500M1634.500 1034.500h4M1636.500 1031.500v3"/></g>
  <circle cx="1702.500" cy="1029.500" r="7" fill="#f2f3f5" stroke="#666"/><path d="M1699 1029.500h7" stroke="#444" stroke-width="1.400"/>
  <circle cx="1818.500" cy="1029.500" r="7" fill="#f2f3f5" stroke="#666"/><path d="M1815 1029.500h7M1818.500 1026v7" stroke="#444" stroke-width="1.400"/>
  <path d="M1711 1029.500h99" stroke="#8a909a"/><path d="M1711 1030.500h99" stroke="#fff"/>
  <path d="M1753.500 1023.500h7v7l-3.500 4-3.500-4z" fill="#eef0f3" stroke="#666"/>
  <rect x="1834.500" y="1022.500" width="15" height="14" rx="1" fill="#e8eaee" stroke="#666"/><path d="M1837 1025l3.500 3.500M1847 1025l-3.500 3.500M1837 1034l3.500-3.500M1847 1034l-3.500-3.500" stroke="#444"/>
  <circle cx="1869.500" cy="1029" r="6.500" fill="#dfe9fa" stroke="#3a62b0" stroke-width="1.300"/><path d="M1865.500 1029h8M1869.500 1025v8" stroke="#2a4fa0" stroke-width="1.300"/><path d="M1874 1034l3 3" stroke="#c88a20" stroke-width="2"/>
  <g fill="#fff" stroke="#555"><rect x="1896.500" y="1024.500" width="6" height="5"/><rect x="1903.500" y="1028.500" width="6" height="5" fill="#7aa0e0" stroke="#3a62b0"/><rect x="1897.500" y="1032.500" width="5" height="4"/></g>
 </svg>
 <div class="st" style="left:1654px;color:#333">93%</div>
</div>

<div id="taskbar">
<div class="tbb" style="left:60px"></div><div class="tbb" style="left:122px"></div><div class="tbb" style="left:184px"></div><div class="tbb" style="left:246px;width:54px"></div><div class="tbb" style="left:308px"></div><div class="tbb" style="left:370px"></div><div class="tbb act" style="left:432px"></div><div class="tbb" style="left:494px"></div><div style="position:absolute;left:299px;top:1px;width:6px;height:40px;border:1px solid #3c5474;border-left:none;border-radius:0 3px 3px 0;background:#a9c1e0"></div><div style="position:absolute;left:301px;top:2px;width:1px;height:38px;background:#3c5474"></div><div style="position:absolute;left:1905px;top:0;width:15px;height:40px;border-left:1px solid #2a3a52;background:linear-gradient(to right,#c8d2e0 0,#8c9db5 25%,#7d8fa8 100%);box-shadow:inset 1px 0 0 rgba(255,255,255,.5)"></div>
<svg width="1920" height="40" viewBox="0 1040 1920 40" style="left:0;top:0">
<defs>
 <radialGradient id="orb" cx=".5" cy=".32" r=".75"><stop offset="0" stop-color="#8fd0f4"/><stop offset=".45" stop-color="#2f7fc4"/><stop offset=".8" stop-color="#134a8c"/><stop offset="1" stop-color="#0c2f60"/></radialGradient>
 <radialGradient id="orbg" cx=".5" cy="1" r=".6"><stop offset="0" stop-color="#6fe0ff" stop-opacity=".9"/><stop offset="1" stop-color="#6fe0ff" stop-opacity="0"/></radialGradient>
 <linearGradient id="flm" x1="0" y1="0" x2="0" y2="1"><stop offset="0" stop-color="#ffe27a"/><stop offset=".5" stop-color="#fdb63a"/><stop offset="1" stop-color="#f58a1e"/></linearGradient>
 <linearGradient id="ieb" x1="0" y1="0" x2="0" y2="1"><stop offset="0" stop-color="#5ab4f0"/><stop offset="1" stop-color="#1656b0"/></linearGradient>
 <linearGradient id="fld" x1="0" y1="0" x2="0" y2="1"><stop offset="0" stop-color="#fbe9a8"/><stop offset="1" stop-color="#f0c860"/></linearGradient>
</defs>
<!-- start orb -->
<circle cx="27" cy="1060" r="19" fill="#1d3b5e" opacity=".55"/>
<circle cx="27" cy="1060" r="17.500" fill="url(#orb)" stroke="#bfe0f8" stroke-opacity=".7" stroke-width="1"/>
<circle cx="27" cy="1060" r="17" fill="url(#orbg)"/>
<g transform="translate(27 1060) scale(1.320) translate(-26 -1060.300)">
<path d="M19 1053c2.500-1.200 4.500-1.200 7 0l-1.600 6.200c-2.300-1.100-4.400-1.100-7 0z" fill="#f2602a"/>
<path d="M27.500 1053.500c2.500 1.300 4.700 1.200 7.300 0l-1.700 6.200c-2.500 1.200-4.700 1.200-7.200 0z" fill="#8ccb3c"/>
<path d="M17 1060.700c2.500-1.200 4.600-1.100 7 0l-1.600 6.200c-2.400-1.200-4.600-1.200-7 0z" fill="#42aaf0"/>
<path d="M25.500 1061.300c2.500 1.200 4.700 1.200 7.200 0l-1.700 6.200c-2.500 1.200-4.700 1.200-7.100 0z" fill="#fdc62a"/>
</g>
<!-- flame icon -->
<path d="M96 1044c-3 5-10 5-14 10-5 6-3.500 17 5.500 19.500 9 2 15.500-4.500 14.500-12.500-.8-5.500-5-8-9-7.500 2.500-2 4-5 3-9.500z" fill="url(#flm)"/>
<path d="M91 1059c-5 .5-8.500 4-8 8.500.5 4.500 5 6.500 8.500 5.500 4.500-1.200 6-6.500 3-9.500-1.800-1.800-4.200-1.500-4.700 0-.5 1.500 1.500 2 2 1" fill="#f07a1a"/>
<!-- chrome -->
<circle cx="151" cy="1060" r="14.500" fill="#e9e9e9"/>
<path d="M151 1060l-12.560-7.250a14.500 14.500 0 0 1 25.120 0z" fill="#db4437"/><path d="M138.440 1052.750a14.500 14.500 0 0 1 25.120 0h-12.560z" fill="#db4437"/>
<path d="M138.440 1052.750a14.500 14.500 0 0 0 12.560 21.750l6.300-10.900z" fill="#3aa757"/>
<path d="M163.560 1052.750a14.500 14.500 0 0 1-12.560 21.750l6.300-10.900-6.300-10.850z" fill="#fbcf33"/>
<circle cx="151" cy="1060" r="6.600" fill="#f4f4f4"/><circle cx="151" cy="1060" r="5.200" fill="#4a8af0"/>
<!-- IE -->
<path d="M205.500 1060.500h17.500c.3-5.500-3.500-9.500-9-9.500s-9.500 4-9.500 9.500 4 10 10 10c4 0 7-2 8.300-5" fill="none" stroke="#0f4fa8" stroke-width="6.200"/>
<path d="M205.500 1060.500h17.500c.3-5.500-3.500-9.500-9-9.500s-9.500 4-9.500 9.500 4 10 10 10c4 0 7-2 8.300-5" fill="none" stroke="#3d9be9" stroke-width="3.800"/>
<path d="M206 1057.500h15" stroke="#bfe2fb" stroke-width="1.200" fill="none"/>
<path d="M205 1074.500c-9 4.500-11-2-3.500-12 6-8 16-15 22.500-16.500 5-1.200 6 1.500 3.500 6" fill="none" stroke="#f0b820" stroke-width="2.400"/>
<!-- folder -->
<path d="M255 1052l2-4h10l2 3h16v24h-30z" fill="#e9c56a"/><path d="M259 1050h24v6h-24z" fill="#fff"/><rect x="260" y="1046.500" width="3" height="2.500" fill="#38a838"/><rect x="269" y="1049" width="3" height="2.500" fill="#d83030"/><rect x="276" y="1051" width="3" height="2.500" fill="#3888d8"/>
<path d="M256 1056h31v21h-31z" fill="url(#fld)" stroke="#d0a848" stroke-width=".8"/>
<path d="M260 1077v-8c0-1.500 1-2.500 2.500-2.500h18c1.500 0 2.500 1 2.500 2.500v8h-6v-5h-11v5z" fill="#8fd0ec" stroke="#4aa0c8" stroke-width=".8"/>
<!-- python -->
<path d="M336 1044c-6 0-8 2-8 5v4h8.500v1.500h-12c-3.500 0-5.500 2.500-5.500 7s2 7 5 7h3.500v-5c0-3 2.500-5.500 5.500-5.500h8c2.500 0 4.500-2 4.500-4.500v-4.500c0-3-3-5-9.500-5z" fill="#3b76a8"/><circle cx="331.500" cy="1048.500" r="1.500" fill="#fff"/>
<path d="M337 1077c6 0 8-2 8-5v-4h-8.500v-1.500h12c3.500 0 5.500-2.500 5.500-7s-2-7-5-7h-3.500v5c0 3-2.500 5.500-5.500 5.500h-8c-2.500 0-4.500 2-4.500 4.500v4.500c0 3 3 5 9.500 5z" fill="#fbd043"/><circle cx="341.500" cy="1072.500" r="1.500" fill="#fff"/>
<!-- outlook -->
<path d="M384 1048h24v24h-24z" fill="#fbe4b4" stroke="#e8981c" stroke-width="2.200"/>
<path d="M389 1054l24 3-2 18-24-3z" fill="#fdfdfd" stroke="#d8c8a8" stroke-width=".8"/><path d="M389 1054l11 9 13-6" fill="none" stroke="#e0a858" stroke-width="1"/>
<circle cx="398" cy="1066" r="9" fill="#fbcf4a" stroke="#e09818" stroke-width="1.200"/><path d="M394 1063l4 4 5-3" fill="none" stroke="#c07808" stroke-width="1.600"/>
<!-- visio -->
<path d="M452 1046h20v28h-26v-22z" fill="#fff" stroke="#2a56b8" stroke-width="1.200"/><path d="M446 1052l6-6v6z" fill="#8ab0e8"/>
<path d="M452 1048h18v14h-22z" fill="#d8e6f8"/>
<text x="459" y="1066" font-family="Liberation Sans,sans-serif" font-weight="700" font-size="20" text-anchor="middle" fill="#2448a8">V</text>
<path d="M450 1064l24-2 1.500 14-24 2z" fill="#f4f8fd" stroke="#b8c8e0" stroke-width=".6"/><path d="M466 1064l3-2 3 2-3 2zM468 1068h2.500v6h-2.500z" fill="#3a62c0"/><path d="M453 1070h10M453 1073h10" stroke="#6a8ad0" stroke-width="1.200" stroke-dasharray="1.500 1"/>
<!-- photoshop -->
<rect x="510" y="1046.500" width="26" height="25" fill="#1a1f6a" stroke="#7ab0f0" stroke-width="1.600"/>
<text x="523" y="1065" font-family="Liberation Sans,sans-serif" font-weight="700" font-size="16" text-anchor="middle" fill="#8ab8f4">Ps</text>
<!-- tray -->
<g fill="none" stroke="#e6e9ee">
 <rect x="1647.500" y="1057.500" width="14" height="8" rx="1" fill="#aeb4bd" stroke="#e6e9ee"/><path d="M1650 1060h9M1650 1062.500h9" stroke="#4a5666" stroke-dasharray="1 1"/><path d="M1655 1057c0-3 3-3 5.500-4.500"/>
 <circle cx="1677.500" cy="1059.500" r="7.200" fill="#1c2cc0" stroke="#d8dcf0" stroke-width="1.200"/>
 <path d="M1701 1050.500h4.500v3.500h-1.500" stroke-width="1.200"/><rect x="1698.500" y="1052.500" width="4.500" height="3.500" fill="#1c2b48" stroke-width="1.200"/>
</g>
<text x="1677.500" y="1064" font-family="Liberation Sans,sans-serif" font-weight="700" font-size="12" text-anchor="middle" fill="#fff">?</text>
<path d="M1697 1062h6l-3 3z" fill="#fff"/><path d="M1713.500 1063h7.500l-3.700-4z" fill="#fff"/>
<rect x="1733.500" y="1050.500" width="14" height="14" rx="1.500" fill="#fbe0b0" stroke="#f0981c" stroke-width="1.800"/><circle cx="1743" cy="1062" r="6" fill="#fbcf4a" stroke="#e09818"/><path d="M1740 1060l3 3 3.500-2.500" fill="none" stroke="#b06808" stroke-width="1.300"/>
<path d="M1760.500 1051v17" stroke="#fff" stroke-width="1.600"/><path d="M1761.500 1052c3-1.500 4.500 1 7 0l4 1.500c-1.500 3-1 4-1 4-3 1.500-5-1-7 0-1 .5-2 1-3 1z" fill="#fff"/>
<g fill="none" stroke="#fff" stroke-width="1.300"><rect x="1786.500" y="1054.500" width="10" height="8" fill="#2a3a58"/><path d="M1789 1066.500h6M1792 1062.500v4"/><path d="M1783.500 1050v10h3M1781.500 1052.500h4" stroke-width="1.600"/></g>
<path d="M1808 1057h3.500l4.500-4.500v16l-4.500-4.500h-3.500z" fill="#fff"/><path d="M1819 1055.500c2 2.500 2 7 0 9.500" fill="none" stroke="#e6e9ee" stroke-width="1.200"/>
</svg>
<div class="tray" style="left:1625px;top:13px;font-family:'Liberation Mono',monospace;font-size:13px;letter-spacing:-1.200px;transform:scaleY(1.100)">CH</div>
<div class="tray" style="left:1827px;top:5px;width:80px">9:12</div>
<div class="tray" style="left:1828px;top:23px;width:80px">2014/5/16</div>
</div>

</body>
</html>
